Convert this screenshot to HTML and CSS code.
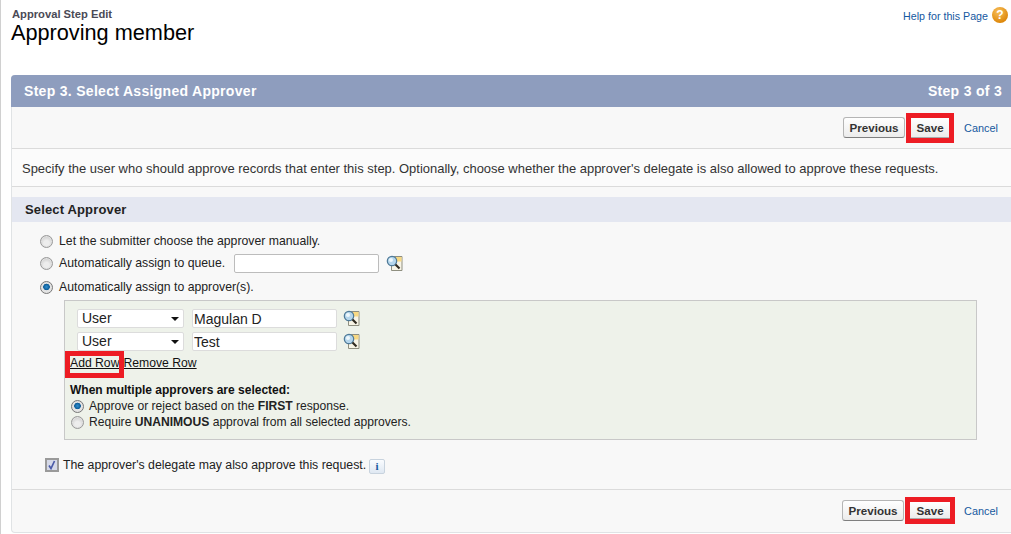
FILE: index.html
```html
<!DOCTYPE html>
<html lang="en">
<head>
<meta charset="utf-8">
<title>Approval Step Edit</title>
<link rel="stylesheet" href="styles.css">
</head>
<body>
<header class="page-head">
  <div class="titles">
    <div class="eyebrow">Approval Step Edit</div>
    <h1>Approving member</h1>
  </div>
  <a class="help"><span class="help-text">Help for this Page</span> <span class="help-icon">?</span></a>
</header>
<main class="panel">
  <div class="step-bar"><span>Step 3. Select Assigned Approver</span><span>Step 3 of 3</span></div>
  <div class="actions top">
    <button class="btn">Previous</button>
    <span class="mark"><button class="btn">Save</button></span>
    <a class="cancel">Cancel</a>
  </div>
  <p class="intro">Specify the user who should approve records that enter this step. Optionally, choose whether the approver's delegate is also allowed to approve these requests.</p>
  <h2 class="section">Select Approver</h2>
  <div class="body">
    <label class="opt first"><span class="radio"></span>Let the submitter choose the approver manually.</label>
    <label class="opt second"><span class="radio"></span>Automatically assign to queue.<input class="queue" type="text">
      <svg class="lookup" viewBox="0 0 17 17"><use href="#lk"/></svg></label>
    <label class="opt third"><span class="radio on"></span>Automatically assign to approver(s).</label>
    <div class="approvers">
      <div class="row">
        <div class="select">User<i></i></div><input class="name" type="text" value="Magulan D">
        <svg class="lookup" viewBox="0 0 17 17"><use href="#lk"/></svg>
      </div>
      <div class="row">
        <div class="select">User<i></i></div><input class="name" type="text" value="Test">
        <svg class="lookup" viewBox="0 0 17 17"><use href="#lk"/></svg>
      </div>
      <div class="links"><span class="mark-link"><a>Add Row</a></span><a>Remove Row</a></div>
      <div class="multi">When multiple approvers are selected:</div>
      <label class="opt sub"><span class="radio on"></span><span>Approve or reject based on the <b>FIRST</b> response.</span></label>
      <label class="opt sub"><span class="radio"></span><span>Require <b>UNANIMOUS</b> approval from all selected approvers.</span></label>
    </div>
    <label class="delegate"><span class="check"><svg viewBox="0 0 10 10"><path d="M2 5.500 4 8.500 7.500 1" fill="none" stroke="#4a5aa8" stroke-width="1.700"/></svg></span>The approver's delegate may also approve this request.<span class="info">i</span></label>
  </div>
  <div class="actions bottom">
    <button class="btn">Previous</button>
    <span class="mark"><button class="btn">Save</button></span>
    <a class="cancel">Cancel</a>
  </div>
</main>
<svg class="defs" aria-hidden="true"><defs><g id="lk">
  <path d="M5.500 1.500h10.500v14H5.500z" fill="#f7f4e6" stroke="#8f8f80"/>
  <path d="M9 2h6.500v4.500H9z" fill="#f8d983"/>
  <circle cx="6" cy="6" r="4.700" fill="#b5d6ec" stroke="#4f7a98" stroke-width="1.200"/>
  <circle cx="5" cy="5" r="2" fill="#eef7fc"/>
  <path d="M9.500 9.500 13.500 13.500" stroke="#2f2a20" stroke-width="2.200"/>
</g></defs></svg>
</body>
</html>
```
FILE: styles.css
```css
*, *::before, *::after { box-sizing: border-box; }
html, body { margin: 0; padding: 0; }
body {
  width: 1011px;
  height: 534px;
  overflow: hidden;
  background: #fff;
  border-left: 1px solid #d0d0d0;
  font-family: "Liberation Sans", Arial, sans-serif;
  font-size: 12px;
  color: #222;
}
.defs { display: none; }
.page-head {
  height: 75px;
  padding: 8px 3px 0 10px;
  display: flex;
  justify-content: space-between;
  align-items: flex-start;
}
.eyebrow { font-size: 11.2px; font-weight: bold; color: #4a4a56; line-height: 13px; margin-left: 1px; }
h1 { margin: 0; font-size: 21.7px; font-weight: normal; color: #000; line-height: 24px; }
.help { display: flex; align-items: flex-start; gap: 4px; color: #15589f; font-size: 10.7px; margin-top: -1px; line-height: 16px; }
.help-text { padding-top: 1px; }
.help-icon {
  width: 16px; height: 16px; border-radius: 50%;
  background: radial-gradient(circle at 40% 30%, #f8c05c, #dd8608 75%);
  color: #fff; font-weight: bold; font-size: 12px; line-height: 16px; text-align: center;
}
.panel {
  margin-left: 10px;
  height: 458px;
  background: #f8f8f8;
  border-left: 1px solid #e0e3e5;
  border-bottom: 1px solid #e0e3e5;
  border-radius: 4px 0 0 4px;
}
.step-bar {
  height: 32px;
  margin-left: -1px;
  padding: 0 9px 0 13px;
  background: #8e9dbe;
  color: #fff;
  font-size: 14px;
  font-weight: bold;
  letter-spacing: 0.3px;
  border-radius: 4px 0 0 0;
  display: flex;
  align-items: center;
  justify-content: space-between;
}
.actions {
  display: flex;
  align-items: center;
  justify-content: flex-end;
  padding-right: 13px;
}
.actions.top { height: 42px; border-bottom: 1px solid #dbdbdb; }
.actions.bottom { height: 42px; border-top: 1px solid #dbdbdb; }
.btn {
  height: 21px;
  width: 62px;
  padding: 0;
  border: 1px solid #b5b5b5;
  border-bottom-color: #7f7f7f;
  border-radius: 3px;
  background: linear-gradient(#fff, #ececec);
  color: #333;
  font: bold 11.6px "Liberation Sans", Arial, sans-serif;
}
.mark {
  position: relative;
  width: 48px;
  height: 30px;
  margin: 0 10px 0 1px;
  border: 5px solid #ed1c24;
  display: flex;
  align-items: center;
  justify-content: center;
}
.bottom .mark { width: 50px; height: 27px; margin-right: 9px; margin-left: 1px; }
.mark .btn { width: 100%; height: 100%; border: 0; border-bottom: 1px solid #aaa; border-radius: 0; }
.cancel { color: #15589f; font-size: 10.9px; }
.intro {
  margin: 0;
  height: 38px;
  padding: 1px 0 0 10px;
  font-size: 12.97px;
  line-height: 37px;
  color: #333;
  border-bottom: 1px solid #dbdbdb;
  background: #fbfbfb;
}
.section {
  margin: 10px 0 0;
  height: 25px;
  padding-left: 13px;
  background: #e4e7f1;
  color: #222;
  font-size: 13px;
  letter-spacing: 0.15px;
  font-weight: bold;
  line-height: 25px;
}
.body { height: 267px; padding-left: 28px; }
.opt { display: flex; align-items: center; font-size: 12.25px; color: #222; }
.first { padding-top: 12px; height: 26px; }
.second { margin-top: 5px; height: 20px; }
.third { margin-top: 5px; height: 18px; }
.radio {
  flex: none;
  width: 13px; height: 13px;
  margin-right: 6px;
  border-radius: 50%;
  border: 1px solid #999;
  background: radial-gradient(circle at 50% 65%, #ededed 30%, #bdbdbd);
  box-shadow: inset 0 0 0 1px #e2e2e2;
}
.radio.on { background: radial-gradient(circle at 50% 45%, #2f8fd0 0, #0d5c97 3px, #e4e4e4 3.6px); border-color: #777; }
.queue {
  width: 145px; height: 19px;
  margin: 0 7px 0 9px;
  border: 1px solid #bcbcbc;
  border-radius: 2px;
  background: #fff;
}
.lookup { width: 17px; height: 17px; flex: none; }
.approvers {
  width: 913px;
  height: 140px;
  margin: 4px 0 0 24px;
  padding: 6px 0 0 5px;
  background: #eef2ea;
  border: 1px solid #c8c8c8;
}
.row { display: flex; align-items: center; height: 23px; margin-left: 7px; }
.select {
  width: 107px; height: 19px;
  padding-left: 4px;
  background: #fff;
  border: 1px solid #dcdcdc;
  border-radius: 2px;
  font-size: 14px;
  line-height: 17px;
  position: relative;
  color: #222;
}
.select i {
  position: absolute; right: 4px; top: 7px;
  border: 4px solid transparent;
  border-top: 4px solid #111;
  border-bottom: 0;
}
.name {
  width: 145px; height: 19px;
  margin: 0 6px 0 8px;
  padding: 0 0 0 1px;
  border: 1px solid #dcdcdc;
  border-radius: 2px;
  background: #fff;
  font: 14px "Liberation Sans", Arial, sans-serif;
  color: #222;
}
.links { display: flex; gap: 4px; height: 20px; align-items: center; font-size: 12.2px; white-space: nowrap; }
.links a { text-decoration: underline; color: #111; }
.mark-link { position: relative; }
.mark-link::after {
  content: "";
  position: absolute;
  left: -5px;
  right: -5px;
  top: -5px;
  height: 27px;
  border: 5px solid #ed1c24;
}
.multi { font-weight: bold; font-size: 12px; color: #111; margin-top: 9px; height: 16px; line-height: 16px; }
.sub { height: 16px; font-size: 12.1px; margin-left: 1px; }
.sub .radio { margin-right: 5px; }
.delegate { display: flex; align-items: center; height: 18px; margin: 16px 0 0 5px; font-size: 12.3px; color: #222; }
.check {
  width: 14px; height: 14px; margin-right: 4px;
  border: 2px solid #9a9a9a;
  background: #d5d9e8;
  display: flex;
}
.check svg { width: 10px; height: 10px; }
.info {
  width: 16px; height: 15px; margin: 2px 0 0 3px;
  border: 1px solid #c8d3de; border-radius: 2px;
  background: linear-gradient(#fafcff, #dfe8f2);
  color: #15589f; font: bold 11px/13px "Liberation Serif", serif; text-align: center;
}
```
